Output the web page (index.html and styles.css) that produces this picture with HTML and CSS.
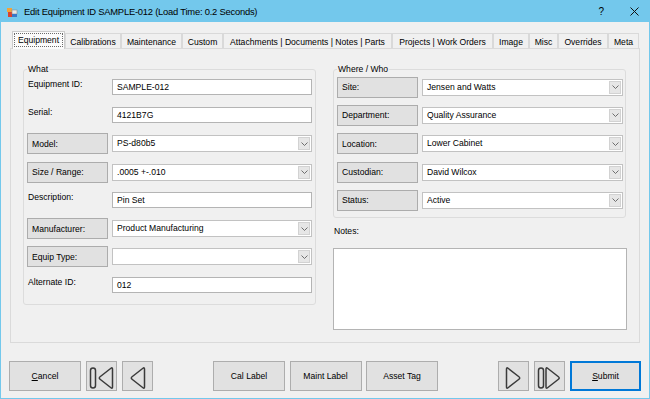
FILE: index.html
```html
<!DOCTYPE html>
<html>
<head>
<meta charset="utf-8">
<title>Edit Equipment</title>
<link rel="stylesheet" href="styles.css">
</head>
<body>
<div class="window">
  <div class="titlebar">
    <svg class="appicon" width="11" height="10" viewBox="0 0 11 10">
      <rect x="0" y="0" width="5" height="4" fill="#f2a33a"/>
      <rect x="1" y="4" width="4" height="5" fill="#d8432f"/>
      <rect x="5" y="2" width="5" height="4" fill="#e8e8e8" stroke="#8a8a8a" stroke-width="0.6"/>
      <rect x="5" y="6" width="5" height="3" fill="#3a78c8"/>
    </svg>
    <span class="title">Edit Equipment ID SAMPLE-012 (Load Time: 0.2 Seconds)</span>
    <span class="help">?</span>
    <svg class="close" width="9" height="9" viewBox="0 0 9 9">
      <path d="M0.5 0.5 L8.5 8.5 M8.5 0.5 L0.5 8.5" stroke="#111" stroke-width="1"/>
    </svg>
  </div>
  <div class="client">
    <div class="tabs">
      <div class="tab sel"><span class="focus">Equipment</span></div>
      <div class="tab">Calibrations</div>
      <div class="tab">Maintenance</div>
      <div class="tab">Custom</div>
      <div class="tab">Attachments | Documents | Notes | Parts</div>
      <div class="tab">Projects | Work Orders</div>
      <div class="tab">Image</div>
      <div class="tab">Misc</div>
      <div class="tab">Overrides</div>
      <div class="tab">Meta</div>
    </div>
    <div class="panel">
      <fieldset class="group">
        <legend>What</legend>
        <div class="rows">
          <div class="row"><span class="lbl">Equipment ID:</span><div class="text">SAMPLE-012</div></div>
          <div class="row"><span class="lbl">Serial:</span><div class="text">4121B7G</div></div>
          <div class="row"><span class="lbox">Model:</span><div class="combo"><span class="val">PS-d80b5</span><span class="arrow"><svg width="7" height="4" viewBox="0 0 7 4"><path d="M0.5 0.5 L3.5 3.5 L6.5 0.5" fill="none" stroke="#606060" stroke-width="0.9"/></svg></span></div></div>
          <div class="row"><span class="lbox">Size / Range:</span><div class="combo"><span class="val">.0005 +-.010</span><span class="arrow"><svg width="7" height="4" viewBox="0 0 7 4"><path d="M0.5 0.5 L3.5 3.5 L6.5 0.5" fill="none" stroke="#606060" stroke-width="0.9"/></svg></span></div></div>
          <div class="row"><span class="lbl">Description:</span><div class="text">Pin Set</div></div>
          <div class="row"><span class="lbox">Manufacturer:</span><div class="combo"><span class="val">Product Manufacturing</span><span class="arrow"><svg width="7" height="4" viewBox="0 0 7 4"><path d="M0.5 0.5 L3.5 3.5 L6.5 0.5" fill="none" stroke="#606060" stroke-width="0.9"/></svg></span></div></div>
          <div class="row"><span class="lbox">Equip Type:</span><div class="combo"><span class="val"></span><span class="arrow"><svg width="7" height="4" viewBox="0 0 7 4"><path d="M0.5 0.5 L3.5 3.5 L6.5 0.5" fill="none" stroke="#606060" stroke-width="0.9"/></svg></span></div></div>
          <div class="row"><span class="lbl">Alternate ID:</span><div class="text">012</div></div>
        </div>
      </fieldset>
      <div class="rightcol">
        <fieldset class="group right">
          <legend>Where / Who</legend>
          <div class="rows">
            <div class="row"><span class="lbox">Site:</span><div class="combo"><span class="val">Jensen and Watts</span><span class="arrow"><svg width="7" height="4" viewBox="0 0 7 4"><path d="M0.5 0.5 L3.5 3.5 L6.5 0.5" fill="none" stroke="#606060" stroke-width="0.9"/></svg></span></div></div>
            <div class="row"><span class="lbox">Department:</span><div class="combo"><span class="val">Quality Assurance</span><span class="arrow"><svg width="7" height="4" viewBox="0 0 7 4"><path d="M0.5 0.5 L3.5 3.5 L6.5 0.5" fill="none" stroke="#606060" stroke-width="0.9"/></svg></span></div></div>
            <div class="row"><span class="lbox">Location:</span><div class="combo"><span class="val">Lower Cabinet</span><span class="arrow"><svg width="7" height="4" viewBox="0 0 7 4"><path d="M0.5 0.5 L3.5 3.5 L6.5 0.5" fill="none" stroke="#606060" stroke-width="0.9"/></svg></span></div></div>
            <div class="row"><span class="lbox">Custodian:</span><div class="combo"><span class="val">David Wilcox</span><span class="arrow"><svg width="7" height="4" viewBox="0 0 7 4"><path d="M0.5 0.5 L3.5 3.5 L6.5 0.5" fill="none" stroke="#606060" stroke-width="0.9"/></svg></span></div></div>
            <div class="row"><span class="lbox">Status:</span><div class="combo"><span class="val">Active</span><span class="arrow"><svg width="7" height="4" viewBox="0 0 7 4"><path d="M0.5 0.5 L3.5 3.5 L6.5 0.5" fill="none" stroke="#606060" stroke-width="0.9"/></svg></span></div></div>
          </div>
        </fieldset>
        <div class="notes-label">Notes:</div>
        <div class="notes"></div>
      </div>
    </div>
    <div class="buttons">
      <div class="bgroup">
        <div class="btn wide"><span><u>C</u>ancel</span></div>
        <div class="btn nav"><svg width="29" height="28" viewBox="0 0 29 28"><rect x="3.5" y="6" width="5" height="20" rx="2.5" fill="none" stroke="#3a3a3a" stroke-width="1.5"/><path transform="translate(11.5 5)" d="M12.43 1.24 L1.57 9.76 Q0 11 1.57 12.24 L12.43 20.76 Q14 22 14 20 L14 2 Q14 0 12.43 1.24 Z" fill="none" stroke="#3a3a3a" stroke-width="1.5" stroke-linejoin="round"/></svg></div>
        <div class="btn nav"><svg width="29" height="28" viewBox="0 0 29 28"><path transform="translate(7.5 5)" d="M12.43 1.24 L1.57 9.76 Q0 11 1.57 12.24 L12.43 20.76 Q14 22 14 20 L14 2 Q14 0 12.43 1.24 Z" fill="none" stroke="#3a3a3a" stroke-width="1.5" stroke-linejoin="round"/></svg></div>
      </div>
      <div class="bgroup mid">
        <div class="btn wide">Cal Label</div>
        <div class="btn wide">Maint Label</div>
        <div class="btn wide">Asset Tag</div>
      </div>
      <div class="bgroup">
        <div class="btn nav"><svg width="29" height="28" viewBox="0 0 29 28"><path transform="translate(21.5 5) scale(-1 1)" d="M12.43 1.24 L1.57 9.76 Q0 11 1.57 12.24 L12.43 20.76 Q14 22 14 20 L14 2 Q14 0 12.43 1.24 Z" fill="none" stroke="#3a3a3a" stroke-width="1.5" stroke-linejoin="round"/></svg></div>
        <div class="btn nav"><svg width="29" height="28" viewBox="0 0 29 28"><rect x="3.5" y="6" width="5" height="20" rx="2.5" fill="none" stroke="#3a3a3a" stroke-width="1.5"/><path transform="translate(25 5) scale(-1 1)" d="M12.43 1.24 L1.57 9.76 Q0 11 1.57 12.24 L12.43 20.76 Q14 22 14 20 L14 2 Q14 0 12.43 1.24 Z" fill="none" stroke="#3a3a3a" stroke-width="1.5" stroke-linejoin="round"/></svg></div>
        <div class="btn wide default"><span><u>S</u>ubmit</span></div>
      </div>
    </div>
  </div>
</div>
</body>
</html>
```

FILE: styles.css
```css
* { box-sizing: border-box; }
html, body { margin: 0; padding: 0; }
body {
  width: 650px;
  height: 399px;
  overflow: hidden;
  background: #f0f0f0;
  font-family: "Liberation Sans", Arial, sans-serif;
  font-size: 8.6px;
  color: #000;
}
.window {
  width: 650px;
  height: 399px;
  display: flex;
  flex-direction: column;
}
.titlebar {
  height: 22px;
  flex: none;
  background: #73c8ec;
  display: flex;
  align-items: center;
  padding-left: 7px;
  padding-right: 11px;
}
.appicon { flex: none; margin-top: 3px; }
.title {
  margin-left: 6px;
  font-size: 9.4px;
  letter-spacing: -0.22px;
  color: #000;
  flex: 1;
  padding-top: 1px;
}
.help {
  font-size: 10px;
  margin-right: 26px;
  padding-top: 1px;
}
.close { flex: none; margin-top: 1px; }

.client {
  flex: 1;
  border: 1px solid #73c8ec;
  border-top: 0;
  background: #f0f0f0;
  display: flex;
  flex-direction: column;
}
.tabs {
  display: flex;
  align-items: flex-end;
  height: 17px;
  margin-top: 9px;
  padding-left: 11px;
}
.tab {
  height: 15px;
  border: 1px solid #d9d9d9;
  border-bottom: 0;
  background: #f0f0f0;
  display: flex;
  align-items: center;
  justify-content: center;
  white-space: nowrap;
  padding-top: 1px;
}
.tab:nth-child(1) { width: 53px; }
.tab:nth-child(2) { width: 56px; }
.tab:nth-child(3) { width: 61px; }
.tab:nth-child(4) { width: 41px; }
.tab:nth-child(5) { width: 169px; }
.tab:nth-child(6) { width: 101px; }
.tab:nth-child(7) { width: 36px; }
.tab:nth-child(8) { width: 29px; }
.tab:nth-child(9) { width: 50px; }
.tab:nth-child(10) { width: 31px; }
.tab.sel {
  height: 18px;
  margin-bottom: -1px;
  position: relative;
  z-index: 1;
  background: #fbfbfb;
  border-color: #cccccc;
  padding: 1px 1px 2px 1px;
  align-items: stretch;
}
.focus {
  flex: 1;
  border: 1px dotted #6a6a6a;
  display: flex;
  align-items: center;
  justify-content: center;
}

.panel {
  margin-left: 9px;
  width: 630px;
  height: 295px;
  flex: none;
  border: 1px solid #dadada;
  background: #f0f0f0;
  display: grid;
  grid-template-columns: 293px 294px;
  column-gap: 17px;
  align-items: start;
  padding: 15px 0 0 12px;
}
.group {
  margin: 0;
  min-width: 0;
  border: 1px solid #dcdcdc;
  border-radius: 3px;
  padding: 0 2px 5px 3px;
}
.group.right { width: 293px; padding-bottom: 3px; }
legend {
  padding: 0 1px;
  line-height: 10px;
  font-size: 8.6px;
  color: #000;
}
.rows { margin-top: -1px; }
.row {
  height: 28.3px;
  display: grid;
  grid-template-columns: 81px 200px;
  column-gap: 4px;
  align-items: center;
}
.right .row { grid-template-columns: 81px 201px; }
.lbl {
  align-self: start;
  margin-top: 6px;
  padding-left: 1px;
  line-height: 10px;
  white-space: nowrap;
}
.lbox {
  height: 21px;
  border: 1px solid #acacac;
  background: #e1e1e1;
  padding-left: 4px;
  display: flex;
  align-items: center;
  white-space: nowrap;
}
.text {
  height: 16px;
  border: 1px solid #b4b4b4;
  background: #fff;
  padding-left: 4px;
  line-height: 14px;
  white-space: nowrap;
}
.combo {
  height: 17px;
  border: 1px solid #c2c2c2;
  background: #fff;
  display: flex;
  align-items: stretch;
  padding: 1px;
}
.combo .val {
  flex: 1;
  padding-left: 3px;
  line-height: 13px;
  white-space: nowrap;
}
.combo .arrow {
  width: 12px;
  background: #e6e6e6;
  border: 1px solid #d2d2d2;
  display: flex;
  align-items: center;
  justify-content: center;
}

.rightcol { display: flex; flex-direction: column; }
.notes-label {
  margin-top: 8px;
  line-height: 10px;
  padding-left: 1px;
}
.notes {
  margin-top: 12px;
  height: 82px;
  border: 1px solid #b4b4b4;
  background: #fff;
}

.buttons {
  margin-top: 18px;
  padding: 0 8px;
  display: flex;
  justify-content: space-between;
}
.bgroup { display: flex; gap: 5px; }
.bgroup.mid { gap: 4.5px; }
.btn {
  height: 30px;
  border: 1px solid #adadad;
  background: #e1e1e1;
  display: flex;
  align-items: center;
  justify-content: center;
  white-space: nowrap;
}
.btn.wide { width: 72px; }
.btn.nav { width: 31px; }
.btn.default { width: 71px; border-color: #0078d7; box-shadow: inset 0 0 0 1px #0078d7; }
u { text-decoration: underline; text-underline-offset: 1px; }
```
